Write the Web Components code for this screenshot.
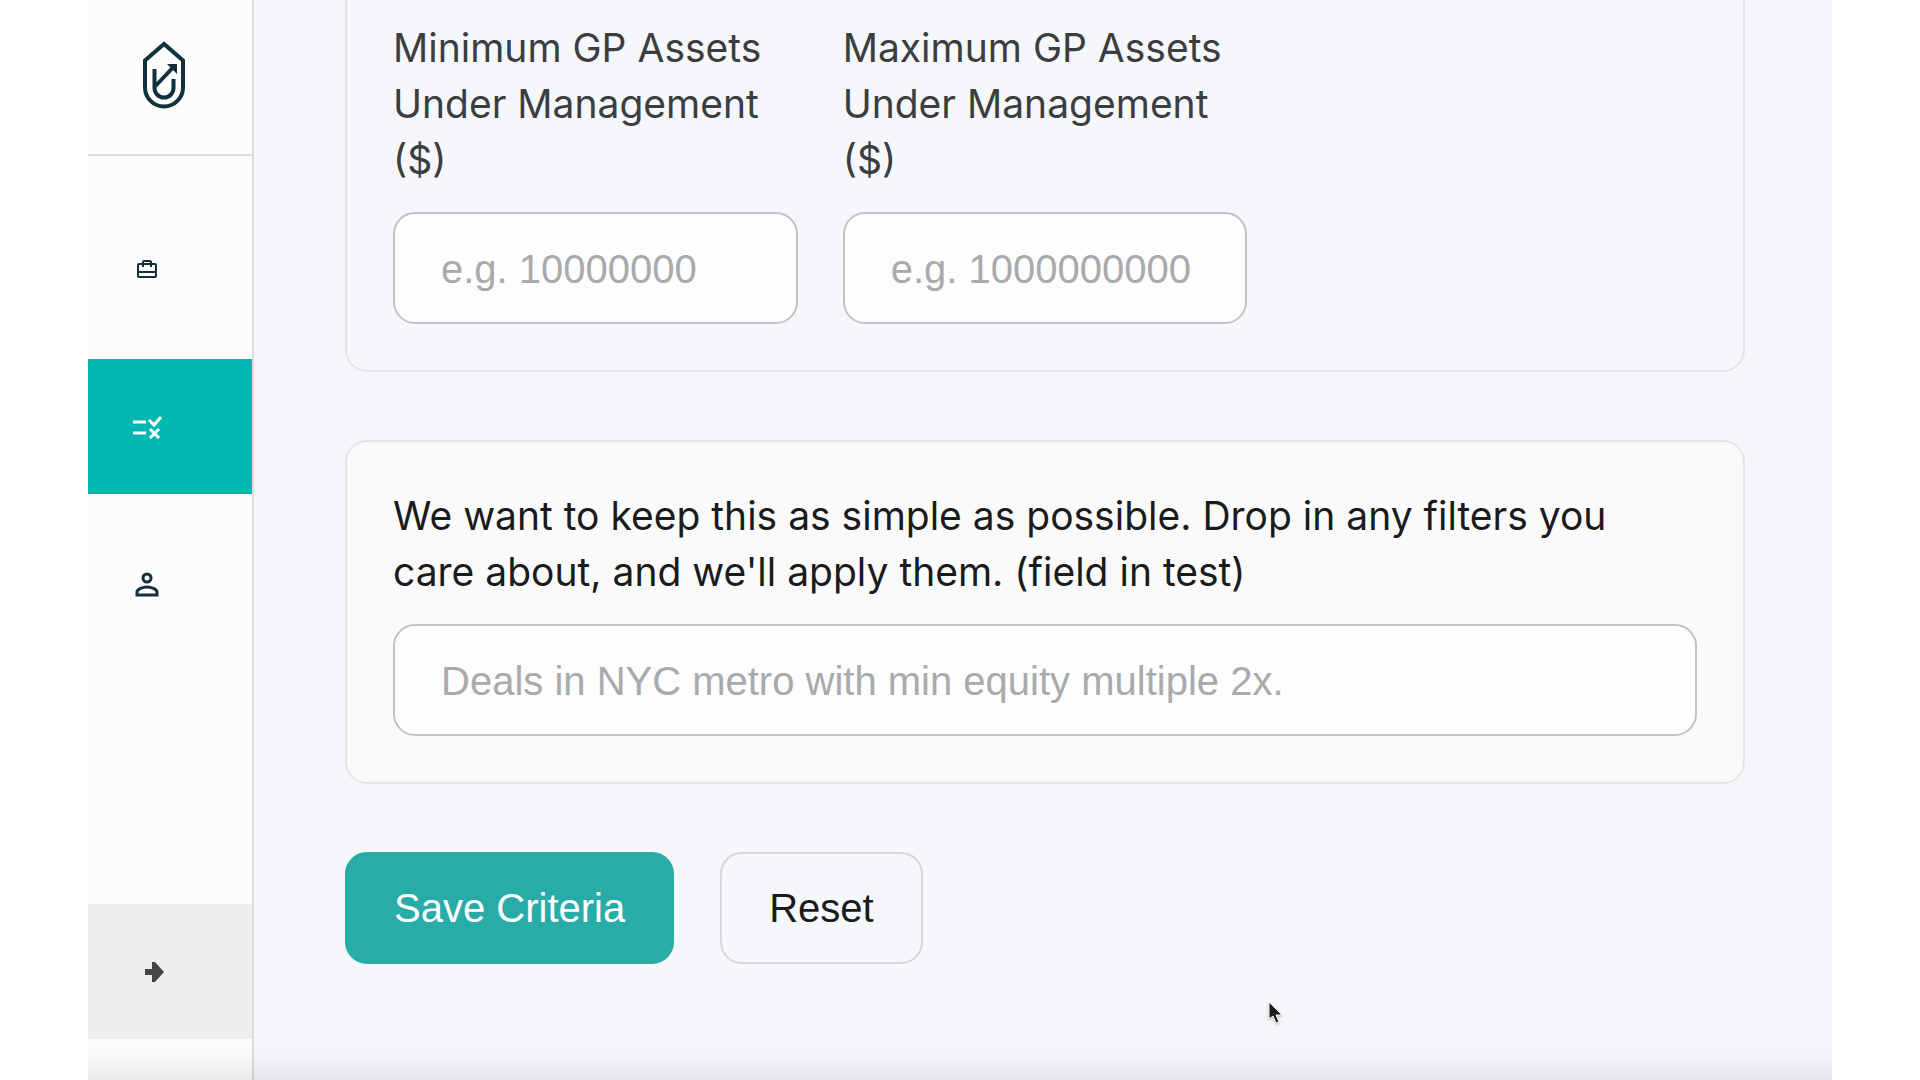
<!DOCTYPE html>
<html lang="en">
<head>
<meta charset="utf-8">
<meta name="viewport" content="width=device-width, initial-scale=1">
<title>Investment Criteria</title>
<style>
  :root {
    --accent: #00b7b2;
    --primary: #27aca7;
    --ink: #1a1b1c;
    --label: #3b3d3e;
    --placeholder: #a9aaab;
    --brand: #12303b;
    --page: #f5f7fa;
    --sidebar: #fcfcfc;
    --border: #e3e5e8;
    --border-input: #c2c3c4;
    --border-side: #dcdddd;
    --radius: 22px;
    --ui: "Liberation Sans", Arial, sans-serif;
  }

  body {
    margin: 0;
    background: #fff;
    color: var(--ink);
    font-family: Inter, sans-serif;
    font-size: 39px;
    line-height: 56px;
  }
</style>
</head>
<body>

<app-shell>
  <side-bar slot="sidebar">
    <brand-logo slot="brand"></brand-logo>
    <nav-item label="Deals" icon="briefcase"></nav-item>
    <nav-item label="Criteria" icon="rule" active></nav-item>
    <nav-item label="Profile" icon="person"></nav-item>
    <side-toggle slot="footer"></side-toggle>
  </side-bar>

  <criteria-card cut columns>
    <form-field label="Minimum GP Assets Under Management ($)" placeholder="e.g. 10000000"></form-field>
    <form-field label="Maximum GP Assets Under Management ($)" placeholder="e.g. 1000000000"></form-field>
  </criteria-card>

  <criteria-card filled>
    <form-field strong
      label="We want to keep this as simple as possible. Drop in any filters you care about, and we'll apply them. (field in test)"
      placeholder="Deals in NYC metro with min equity multiple 2x."></form-field>
  </criteria-card>

  <form-actions>
    <action-button variant="primary">Save Criteria</action-button>
    <action-button>Reset</action-button>
  </form-actions>

  <mouse-pointer slot="overlay"></mouse-pointer>
</app-shell>

<script>
// ─── Icons ────────────────────────────────────────────────────────────────────
const ICONS = {
  briefcase: `
    <g fill="none" stroke="currentColor" stroke-width="2" stroke-linejoin="round">
      <rect x="8" y="12" width="18" height="13" rx="1"/>
      <path d="M13 15V10a1 1 0 0 1 1-1h6a1 1 0 0 1 1 1v5M8 20h18"/>
    </g>`,
  rule: `
    <g fill="none" stroke="currentColor" stroke-width="3">
      <path d="M3 12h13M3 23h13"/>
      <path d="M19 10l5 5 7-8M20 19l9 9M29 19l-9 9"/>
    </g>`,
  person: `
    <g fill="none" stroke="currentColor" stroke-width="3">
      <circle cx="17" cy="10" r="4"/>
      <path d="M7 27v-3c0-3 6-5 10-5s10 2 10 5v3z"/>
    </g>`,
  arrow: `<path fill="currentColor" d="M15 14h7V7h3l9 10-9 10h-3v-7h-7z"/>`
};

function iconSvg(name) {
  return `<svg width="34" height="34" viewBox="0 0 34 34" aria-hidden="true">${ICONS[name] || ''}</svg>`;
}

// ─── Shell ────────────────────────────────────────────────────────────────────
class AppShell extends HTMLElement {
  constructor() {
    super();
    this.attachShadow({ mode: "open" });
  }

  connectedCallback() {
    this.shadowRoot.innerHTML = `
      <style>
        :host {
          position: relative;
          display: grid;
          grid-template-columns: 166px 1fr;
          min-height: 100vh;
          margin: 0 88px;
          background: var(--page);
        }

        main {
          display: flex;
          flex-direction: column;
          gap: 68px;
          padding: 0 87px 68px 91px;
        }

        .fade {
          position: absolute;
          inset: auto 0 0 0;
          height: 42px;
          background: linear-gradient(rgba(120, 124, 130, 0), rgba(120, 124, 130, 0.04) 50%, rgba(120, 124, 130, 0.14));
          pointer-events: none;
        }
      </style>

      <slot name="sidebar"></slot>
      <main><slot></slot></main>
      <div class="fade"></div>
      <slot name="overlay"></slot>
    `;
  }
}

// ─── Sidebar ──────────────────────────────────────────────────────────────────
class SideBar extends HTMLElement {
  constructor() {
    super();
    this.attachShadow({ mode: "open" });
  }

  connectedCallback() {
    this.shadowRoot.innerHTML = `
      <style>
        :host {
          display: flex;
          flex-direction: column;
          background: var(--sidebar);
          border-right: 2px solid var(--border-side);
          color: var(--brand);
        }

        header {
          padding: 41px 0 45px 55px;
          border-bottom: 2px solid var(--border-side);
        }

        nav {
          display: flex;
          flex-direction: column;
          gap: 23px;
          padding: 45px 0;
        }

        footer {
          margin-top: auto;
          padding-bottom: 41px;
        }
      </style>

      <header><slot name="brand"></slot></header>
      <nav><slot></slot></nav>
      <footer><slot name="footer"></slot></footer>
    `;
  }
}

class BrandLogo extends HTMLElement {
  constructor() {
    super();
    this.attachShadow({ mode: "open" });
  }

  connectedCallback() {
    this.shadowRoot.innerHTML = `
      <style>
        :host { display: block; }
        svg { display: block; }
      </style>

      <svg width="42" height="68" viewBox="0 0 42 68" fill="none" stroke="currentColor" stroke-width="4" role="img" aria-label="Home">
        <path d="M21 3L2 19.500V46.500a19 19 0 0 0 38 0V19.500z"/>
        <path d="M11.500 28v19a9.500 9.500 0 0 0 19 0v-9M12 45.500L29.500 27"/>
        <path d="M24 23h10v10z" fill="currentColor" stroke="none"/>
      </svg>
    `;
  }
}

class NavItem extends HTMLElement {
  constructor() {
    super();
    this.attachShadow({ mode: "open" });
  }

  connectedCallback() {
    const label = this.getAttribute("label") || "";
    this.shadowRoot.innerHTML = `
      <style>
        :host { display: block; }

        a {
          display: flex;
          align-items: center;
          height: 135px;
          padding-left: 42px;
          color: inherit;
        }

        :host([active]) a {
          background: var(--accent);
          color: #fff;
        }
      </style>

      <a href="#${label.toLowerCase()}" aria-label="${label}">${iconSvg(this.getAttribute("icon"))}</a>
    `;
  }
}

class SideToggle extends HTMLElement {
  constructor() {
    super();
    this.attachShadow({ mode: "open" });
  }

  connectedCallback() {
    this.shadowRoot.innerHTML = `
      <style>
        :host { display: block; }

        button {
          display: flex;
          align-items: center;
          width: 100%;
          height: 135px;
          padding: 0 0 0 42px;
          border: 0;
          background: #eee;
          color: #434445;
        }
      </style>

      <button type="button" aria-label="Expand sidebar">${iconSvg("arrow")}</button>
    `;
  }
}

// ─── Form ─────────────────────────────────────────────────────────────────────
class CriteriaCard extends HTMLElement {
  constructor() {
    super();
    this.attachShadow({ mode: "open" });
  }

  connectedCallback() {
    this.shadowRoot.innerHTML = `
      <style>
        :host {
          display: grid;
          gap: 45px;
          padding: 46px;
          border: 2px solid var(--border);
          border-radius: var(--radius);
        }

        :host([columns]) { grid-template-columns: repeat(3, 1fr); }
        :host([filled]) { background: #fafafa; }

        /* continues above the top of the view */
        :host([cut]) {
          padding-top: 20px;
          border-top: 0;
          border-radius: 0 0 var(--radius) var(--radius);
        }
      </style>

      <slot></slot>
    `;
  }
}

class FormField extends HTMLElement {
  constructor() {
    super();
    this.attachShadow({ mode: "open" });
  }

  connectedCallback() {
    this.shadowRoot.innerHTML = `
      <style>
        :host {
          display: flex;
          flex-direction: column;
          gap: 24px;
          min-width: 0;
        }

        label { color: var(--label); }
        :host([strong]) label { color: var(--ink); }

        input {
          box-sizing: border-box;
          width: 100%;
          height: 112px;
          padding: 2px 46px 0;
          border: 2px solid var(--border-input);
          border-radius: var(--radius);
          background: #fdfdfd;
          color: var(--ink);
          font: 40px var(--ui);
        }

        input::placeholder { color: var(--placeholder); }
      </style>

      <label for="field">${this.getAttribute("label")}</label>
      <input id="field" type="text" placeholder="${this.getAttribute("placeholder")}">
    `;
  }
}

class FormActions extends HTMLElement {
  constructor() {
    super();
    this.attachShadow({ mode: "open" });
  }

  connectedCallback() {
    this.shadowRoot.innerHTML = `
      <style>
        :host {
          display: flex;
          gap: 46px;
        }
      </style>

      <slot></slot>
    `;
  }
}

class ActionButton extends HTMLElement {
  constructor() {
    super();
    this.attachShadow({ mode: "open" });
  }

  connectedCallback() {
    this.shadowRoot.innerHTML = `
      <style>
        :host { display: block; }

        button {
          height: 112px;
          padding: 0 47px;
          border: 2px solid #d5d7d9;
          border-radius: var(--radius);
          background: transparent;
          color: var(--ink);
          font: 40px var(--ui);
        }

        :host([variant="primary"]) button {
          border-color: var(--primary);
          background: var(--primary);
          color: #fff;
        }
      </style>

      <button type="button"><slot></slot></button>
    `;
  }
}

// ─── Pointer ──────────────────────────────────────────────────────────────────
class MousePointer extends HTMLElement {
  constructor() {
    super();
    this.attachShadow({ mode: "open" });
  }

  connectedCallback() {
    this.shadowRoot.innerHTML = `
      <style>
        :host {
          position: absolute;
          top: 1001px;
          left: 1180px;
          pointer-events: none;
        }

        svg {
          display: block;
          filter: drop-shadow(0 1px 1px rgba(0, 0, 0, 0.3));
        }
      </style>

      <svg width="16" height="24" viewBox="0 0 16 24" aria-hidden="true">
        <path d="M1 1v17l4-3 3 7 3-1-3-7h6z" fill="#1c1c1c" stroke="#fff" stroke-width="1"/>
      </svg>
    `;
  }
}

customElements.define("app-shell", AppShell);
customElements.define("side-bar", SideBar);
customElements.define("brand-logo", BrandLogo);
customElements.define("nav-item", NavItem);
customElements.define("side-toggle", SideToggle);
customElements.define("criteria-card", CriteriaCard);
customElements.define("form-field", FormField);
customElements.define("form-actions", FormActions);
customElements.define("action-button", ActionButton);
customElements.define("mouse-pointer", MousePointer);
</script>
</body>
</html>
